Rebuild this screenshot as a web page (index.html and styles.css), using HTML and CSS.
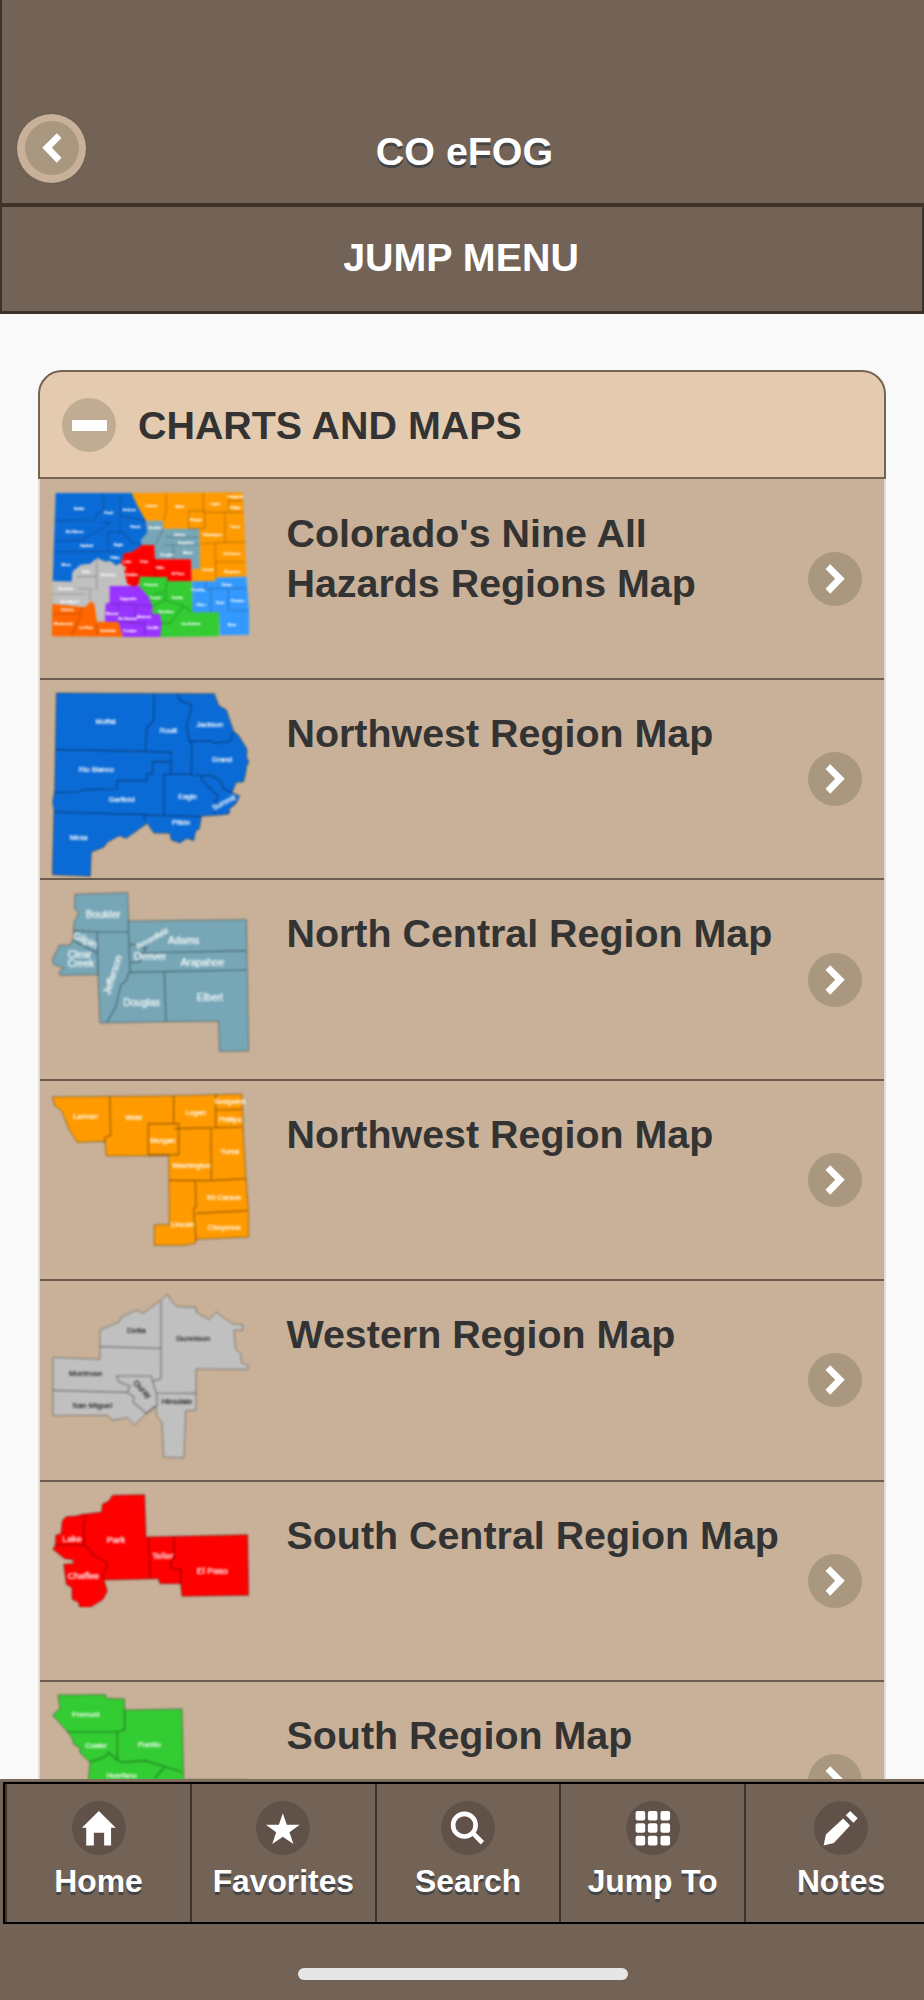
FILE: index.html
```html
<!DOCTYPE html>
<html lang="en">
<head>
  <meta charset="UTF-8">
  <meta name="viewport" content="width=device-width, initial-scale=1.0">
  <title>CO eFOG</title>
  <link rel="stylesheet" href="styles.css">
</head>
<body>

  <header class="header">
    <a class="back" href="#" aria-label="Back">
      <svg viewBox="0 0 163 163"><path d="M110 51L96 37 52 81 96 126 110 111 81 81z"/></svg>
    </a>
    <h1>CO eFOG</h1>
  </header>

  <div class="subheader">JUMP MENU</div>

  <main class="content">
    <h2 class="group-title">
      <span class="minus"></span>
      CHARTS AND MAPS
    </h2>

    <ul class="list">
      <li>
        <svg class="thumb overview" viewBox="36 36 591 436">
          <path fill="#0b6bd6" d="M47 39H275L293 78 318 122 322 160 303 180 306 195 276 216 252 220 243 250 228 257 212 244 194 245 172 234 150 252 122 255 98 275 95 305 38 303z"/>
          <path fill="#ff9a00" d="M275 39L608 37 612 110 619 288 528 293 527 303 455 304 457 268 480 266 478 146 370 146 368 122 318 122 293 78z"/>
          <path fill="#77a7b7" d="M322 122H368L370 146H478L480 266H455L453 238H345L343 195 306 195 303 180 322 160z"/>
          <path fill="#c0c0c0" d="M38 305H95L98 275 122 255 150 252 172 234 194 245 212 244 228 257 243 250 257 290 270 318H209V368L197 370 193 425H170L164 375 154 363 135 382 38 372z"/>
          <path fill="#f00" d="M252 220L276 216 306 195H343L345 238H453L455 304H382V292L300 290 297 312 284 321 262 312 253 275 260 264 243 250z"/>
          <path fill="#9933ff" d="M209 318H298L326 350 338 378 338 402 360 402 366 430 361 471H248L235 427 195 425 197 370 209 368z"/>
          <path fill="#33cc33" d="M300 290L382 292V304H455L457 397H537V469L361 471 366 430 360 402H338V378L326 350 298 318z"/>
          <path fill="#3399ff" d="M457 304H527V293L619 290 627 390V464L540 466 537 397H457z"/>
          <path fill="#ff6600" d="M37 372L135 382 154 363 164 375 170 425 235 427 248 470 36 469z"/>
          <path class="line" d="M47 122L165 120 172 100 190 90V39M47 182H120L160 160 182 150 210 127H180M40 215H243M203 157V215M203 157H250L276 186 303 195M240 45L243 108 318 122M240 110V157M110 290H170M170 234V330M38 342H135M115 325L152 327 148 360M37 402H115L130 384M95 465L125 400M170 428L172 466M378 40V90L372 122M490 38V97H612M446 92H494V146H446zM555 98V187H617M480 192L555 187M526 192L527 293M527 246H617M566 38V97M566 62H610M370 195H478M378 172H478M345 195L370 146M400 195V238M345 238V290M300 262L284 321M382 292L376 360 338 378M376 360L430 378 457 397M430 378L390 430 364 430M338 345L375 335M457 330L497 325V304M497 325H620M512 328V396M565 328V390L627 392M209 370L338 378M235 375V425L315 430V470M290 380L275 430"/>
          <g class="names tiny">
            <text x="117" y="89">Moffat</text><text x="206" y="102">Routt</text><text x="267" y="94">Jackson</text>
            <text x="104" y="159">Rio Blanco</text><text x="286" y="145">Grand</text><text x="140" y="202">Garfield</text>
            <text x="235" y="199">Eagle</text><text x="78" y="258">Mesa</text><text x="225" y="236">Pitkin</text>
            <text x="334" y="81">Larimer</text><text x="418" y="83">Weld</text><text x="525" y="74">Logan</text>
            <text x="468" y="124">Morgan</text><text x="585" y="143">Yuma</text><text x="518" y="168">Washington</text>
            <text x="576" y="226">Kit Carson</text><text x="576" y="279">Cheyenne</text><text x="504" y="273">Lincoln</text>
            <text x="586" y="55">Sedgwick</text><text x="586" y="87">Phillips</text>
            <text x="346" y="147">Boulder</text><text x="420" y="169">Adams</text><text x="438" y="191">Arapahoe</text>
            <text x="380" y="229">Douglas</text><text x="443" y="222">Elbert</text>
            <text x="138" y="279">Delta</text><text x="205" y="289">Gunnison</text><text x="78" y="331">Montrose</text><text x="88" y="368">San Miguel</text>
            <text x="262" y="249">Lake</text><text x="312" y="250">Park</text><text x="275" y="289">Chaffee</text><text x="360" y="266">Teller</text><text x="414" y="285">El Paso</text>
            <text x="265" y="361">Saguache</text><text x="217" y="406">Mineral</text><text x="262" y="420">Rio Grande</text><text x="312" y="413">Alamosa</text><text x="270" y="455">Conejos</text><text x="338" y="448">Costilla</text>
            <text x="333" y="317">Fremont</text><text x="347" y="358">Custer</text><text x="412" y="356">Pueblo</text><text x="378" y="398">Huerfano</text><text x="453" y="436">Las Animas</text>
            <text x="474" y="332">Crowley</text><text x="560" y="318">Kiowa</text><text x="483" y="378">Otero</text><text x="540" y="373">Bent</text><text x="593" y="365">Prowers</text><text x="576" y="437">Baca</text>
            <text x="82" y="392">Dolores</text><text x="70" y="436">Montezuma</text><text x="138" y="447">La Plata</text><text x="204" y="457">Archuleta</text>
          </g>
        </svg>
        <h3>Colorado's Nine All Hazards Regions Map</h3>
        <span class="arrow"><svg viewBox="0 0 163 163"><path d="M53 51L67 37 111 81 67 126 53 111 82 81z"/></svg></span>
      </li>
      <li>
        <svg class="thumb" viewBox="36 36 591 556">
          <path class="shape" fill="#0b6bd6" d="M49 39L523 41 536 76 559 90 581 154 595 165 621 207 620 233 627 246 620 258 616 285 610 306 589 307 576 338 599 348 587 372 570 385 567 402 541 405 484 409 478 447 467 453 461 482 440 475 420 489 394 480 389 460 341 459 322 430 258 475 238 467 203 486 191 502 154 516 151 589 37 584 42 390 38 365 44 330z"/>
          <path class="line" d="M342 40L341 122 320 145 316 212M47 209L316 214 393 217V282M393 245H338V282H320V302H232L230 327 125 329 121 336 44 337M42 396L310 404 370 407M372 407V282M372 282L454 283M310 404L316 424M370 407L484 409M414 41L418 58 437 70 453 72V90L440 135 447 180 455 190 454 285 515 287 541 303 549 325 576 338M447 185L512 182 524 190 570 183 581 157M482 288L490 305 534 348 520 375 524 402"/>
          <g class="names">
            <text x="197" y="133">Moffat</text><text x="385" y="158">Routt</text><text x="510" y="140">Jackson</text><text x="546" y="246">Grand</text>
            <text x="169" y="277">Rio Blanco</text><text x="245" y="366">Garfield</text><text x="443" y="358">Eagle</text>
            <text x="423" y="436">Pitkin</text><text x="116" y="480">Mesa</text>
            <text x="552" y="375" transform="rotate(-27 552 369)">Summit</text>
          </g>
        </svg>
        <h3>Northwest Region Map</h3>
        <span class="arrow"><svg viewBox="0 0 163 163"><path d="M53 51L67 37 111 81 67 126 53 111 82 81z"/></svg></span>
      </li>
      <li>
        <svg class="thumb" viewBox="36 39 591 482">
          <path class="shape" fill="#77a7b7" d="M105 46L263 41 266 126 619 122 626 516 538 517 536 427 378 428 180 432 174 287 60 289 57 278 72 268 40 256 38 240 58 199 91 198 100 178 102 130 116 102 104 88z"/>
          <path class="line" d="M102 155L172 159H265V126M172 159L174 287M100 185L172 222M266 160L270 280 264 285 259 305 242 318 228 382 201 430M268 280L619 273M268 197H290L300 207 320 205 310 222 619 215M270 252L300 248 310 222M373 281L378 428"/>
          <g class="names large">
            <text x="190" y="117">Boulder</text><text x="431" y="194">Adams</text><text x="487" y="261">Arapahoe</text><text x="330" y="243">Denver</text>
            <text x="510" y="365">Elbert</text><text x="305" y="381">Douglas</text><text x="119" y="238">Clear</text><text x="123" y="265">Creek</text>
            <text x="136" y="193" transform="rotate(25 136 184)">Gilpin</text>
            <text x="219" y="297" transform="rotate(-72 219 288)">Jefferson</text>
            <text class="small" x="336" y="186" transform="rotate(-29 336 178)">Broomfield</text>
          </g>
        </svg>
        <h3>North Central Region Map</h3>
        <span class="arrow"><svg viewBox="0 0 163 163"><path d="M53 51L67 37 111 81 67 126 53 111 82 81z"/></svg></span>
      </li>
      <li>
        <svg class="thumb" viewBox="36 39 591 460">
          <path class="shape" fill="#ff9a00" d="M37 51L401 47 606 42 611 180 618 294 626 390V471L468 478 466 490 430 496H343V434H388L386 227 199 228 195 184 112 187 88 150 64 91 45 78z"/>
          <path class="line" d="M209 49L212 166 195 172V187M401 47V131M325 131H416V224H325zM403 146L527 143V43M527 143L608 141M527 90L606 88M513 146L514 299M388 301L514 302 618 296M466 303L468 380 461 387 468 480M468 400L623 392"/>
          <g class="names">
            <text x="137" y="118">Larimer</text><text x="281" y="120">Weld</text><text x="467" y="104">Logan</text><text x="570" y="72">Sedgwick</text>
            <text x="570" y="125">Phillips</text><text x="368" y="188">Morgan</text><text x="569" y="221">Yuma</text><text x="454" y="264">Washington</text>
            <text x="552" y="361">Kit Carson</text><text x="428" y="442">Lincoln</text><text x="553" y="450">Cheyenne</text>
          </g>
        </svg>
        <h3>Northwest Region Map</h3>
        <span class="arrow"><svg viewBox="0 0 163 163"><path d="M53 51L67 37 111 81 67 126 53 111 82 81z"/></svg></span>
      </li>
      <li>
        <svg class="thumb" viewBox="36 40 591 498">
          <path class="shape" fill="#c0c0c0" d="M384 44L392 62 411 81 468 83 470 99 508 120 528 97 578 133 609 135 608 151 582 152 586 207 602 222 605 250 624 257V269L468 268V391L437 393 432 534 371 533 366 428 351 410 348 380 318 402 284 437 262 414 218 422 203 407 39 408V233L180 239V151L237 127 243 114 289 91 309 101 360 64z"/>
          <path class="line" d="M180 201L362 206M363 65V297L338 305 334 289H230L237 307 270 319 262 338 39 332M262 338L282 352 279 367 313 396 318 402M338 305L349 340 468 341M349 340L352 375 318 402"/>
          <g class="names dark">
            <text x="289" y="161">Delta</text><text x="459" y="185">Gunnison</text><text x="137" y="288">Montrose</text><text x="157" y="385">San Miguel</text>
            <text x="411" y="374">Hinsdale</text>
            <text x="307" y="337" transform="rotate(45 307 329)">Ouray</text>
          </g>
        </svg>
        <h3>Western Region Map</h3>
        <span class="arrow"><svg viewBox="0 0 163 163"><path d="M53 51L67 37 111 81 67 126 53 111 82 81z"/></svg></span>
      </li>
      <li>
        <svg class="thumb" viewBox="36 41 591 341">
          <path class="shape" fill="#f00" d="M218 45L314 43 318 170 623 163 626 345 426 348 422 310H360L355 295 192 299 202 333 188 358 152 380H118L116 366 96 357V322L79 312 71 252 100 250 99 238 74 235 38 206 47 195V165L63 160 67 121 78 109 110 107 127 102 147 100 185 95 187 72 206 62z"/>
          <path class="line" d="M137 104L130 135 133 196 150 208 155 222 200 246 202 258 188 280 190 299M40 194H133M325 171L331 294M402 170V235L391 245 395 265 422 267V310"/>
          <g class="names mid">
            <text x="96" y="184">Lake</text><text x="228" y="189">Park</text><text x="368" y="235">Teller</text><text x="130" y="297">Chaffee</text><text x="517" y="282">El Paso</text>
          </g>
        </svg>
        <h3>South Central Region Map</h3>
        <span class="arrow"><svg viewBox="0 0 163 163"><path d="M53 51L67 37 111 81 67 126 53 111 82 81z"/></svg></span>
      </li>
      <li>
        <svg class="thumb" viewBox="156 42 591 450">
          <path class="shape" fill="#33cc33" d="M174 45L316 44 319 55 373 57 374 90 546 87 551 300H744V490H290L265 300 270 247 240 218V205L222 193 215 172 201 153 158 106 180 85z"/>
          <path class="line" d="M201 156H345L374 150V90M352 156V240L367 247 437 242 546 276M270 247L318 229 326 217 352 240M492 262L462 298"/>
          <g class="names">
            <text x="258" y="110">Fremont</text><text x="288" y="205">Custer</text><text x="448" y="201">Pueblo</text><text x="365" y="295">Huerfano</text>
          </g>
        </svg>
        <h3>South Region Map</h3>
        <span class="arrow"><svg viewBox="0 0 163 163"><path d="M53 51L67 37 111 81 67 126 53 111 82 81z"/></svg></span>
      </li>
    </ul>
  </main>

  <footer class="footer">
    <nav class="navbar">
      <a href="#">
        <svg viewBox="215 363 163 163"><path d="M296 393L347 444H333V497H312V459H281V497H258V444H245z"/></svg>
        Home
      </a>
      <a href="#">
        <svg viewBox="769 363 163 163"><path d="M850 400L862 435H901L870 457 882 493 850 471 818 493 830 457 799 435H838z"/></svg>
        Favorites
      </a>
      <a href="#">
        <svg viewBox="-57 363 163 163"><circle class="ring" cx="13.500" cy="436" r="34"/><path d="M35 466L45 456 73 484 63 494z"/></svg>
        Search
      </a>
      <a href="#">
        <svg viewBox="498 363 163 163">
          <rect x="527" y="393" width="29" height="29" rx="6"/><rect x="564" y="393" width="29" height="29" rx="6"/><rect x="602" y="393" width="29" height="29" rx="6"/>
          <rect x="527" y="430" width="29" height="29" rx="6"/><rect x="564" y="430" width="29" height="29" rx="6"/><rect x="602" y="430" width="29" height="29" rx="6"/>
          <rect x="527" y="468" width="29" height="29" rx="6"/><rect x="564" y="468" width="29" height="29" rx="6"/><rect x="602" y="468" width="29" height="29" rx="6"/>
        </svg>
        Jump To
      </a>
      <a href="#">
        <svg viewBox="1067 363 163 163"><path d="M1096 497L1103 464 1155 416 1176 437 1127 490zM1163 406L1176 393 1199 415 1186 429z"/></svg>
        Notes
      </a>
    </nav>
    <div class="home-bar"></div>
  </footer>

</body>
</html>
```

FILE: styles.css
```css
:root {
  --brown: #736357;
  --brown-dark: #3e332b;
  --tan: #c8b198;
  --line: #736453;
}

* {
  box-sizing: border-box;
}

body {
  margin: 0;
  height: 2000px;
  display: flex;
  flex-direction: column;
  overflow: hidden;
  background: #f9f9f9;
  color: #333;
  font-family: "Liberation Sans", Arial, sans-serif;
  font-size: 39.4px;
  font-weight: bold;
}

h1, h2, h3, ul {
  margin: 0;
  padding: 0;
  font-size: inherit;
}

a {
  color: inherit;
  text-decoration: none;
}

svg {
  display: block;
  fill: #fff;
}

.header {
  flex: none;
  height: 205px;
  padding: 113px 14px 0 15px;
  display: grid;
  grid-template-columns: 69px 1fr 67px;
  align-items: start;
  background: var(--brown);
  border-left: 2px solid var(--brown-dark);
  border-bottom: 2px solid var(--brown-dark);
  color: #fff;
  text-align: center;
  text-shadow: 0 2.5px 0 #444;
}

.header h1 {
  padding-top: 14px;
  line-height: 48px;
}

.back {
  width: 69px;
  height: 69px;
  margin-top: 0.5px;
  padding: 7.5px;
  border-radius: 50%;
  background: var(--tan);
  box-shadow: 0 0 2px #5c5040;
}

.back svg {
  width: 54px;
  height: 54px;
  border-radius: 50%;
  background: #a9977f;
}

.subheader {
  flex: none;
  height: 109px;
  padding-right: 2px;
  line-height: 101px;
  background: var(--brown);
  border: 2px solid var(--brown-dark);
  border-bottom-width: 3px;
  color: #fff;
  text-align: center;
}

.content {
  flex: 1;
  min-height: 0;
  padding: 56px 38px 0;
  overflow: hidden;
}

.group-title {
  display: flex;
  align-items: center;
  gap: 22px;
  height: 109px;
  padding: 1px 0 0 22px;
  background: #e4cbb0;
  border: 2px solid var(--line);
  border-radius: 24px 24px 0 0;
}

.minus {
  display: grid;
  place-items: center;
  width: 54px;
  height: 54px;
  border-radius: 50%;
  background: #c0ac93;
}

.minus::before {
  content: "";
  width: 35px;
  height: 11px;
  background: #fff;
}

.list {
  list-style: none;
  border: solid #ddd;
  border-width: 0 2px;
}

.list li {
  display: grid;
  grid-template-columns: 197px 510px 54px;
  justify-content: space-between;
  height: 200.4px;
  padding: 12px 22px 0 12px;
  background: var(--tan);
  border-top: 2px solid #6b5d50;
}

.list li:first-child {
  height: 199px;
  border-top: 0;
  padding-top: 13px;
}

.list h3 {
  margin: 0 -13px 0 13px;
  padding-top: 17px;
  line-height: 49.5px;
}

.thumb {
  width: 197px;
  filter: blur(0.8px);
}

.arrow {
  align-self: center;
  width: 54px;
  height: 54px;
  margin-top: -12px;
  border-radius: 50%;
  background: #a9977f;
}

/* county maps */
.shape {
  stroke: rgba(0, 0, 0, 0.35);
  stroke-width: 3;
}

.line {
  fill: none;
  stroke: rgba(0, 0, 0, 0.4);
  stroke-width: 3.5;
}

.overview .line {
  stroke: rgba(0, 0, 0, 0.22);
}

.names {
  fill: #fff;
  stroke: #fff;
  stroke-width: 0.6;
  font-size: 22px;
  font-weight: normal;
  text-anchor: middle;
}

.names.large {
  font-size: 30px;
}

.names .small {
  font-size: 22px;
}

.names.mid {
  font-size: 27px;
}

.names.dark {
  fill: #222;
  stroke: #222;
  font-size: 24px;
}

.names.tiny {
  font-size: 11px;
}

.footer {
  flex: none;
  height: 221px;
  padding: 1px 0 0 3px;
  background: var(--brown);
  border-top: 2px solid #7d6e5d;
  overflow: hidden;
}

.navbar {
  display: grid;
  grid-template-columns: 187px 184.7px 184.7px 184.7px 192px;
  height: 142px;
  width: 938px;
  border: 2px solid #000;
  color: #fff;
  font-size: 31.8px;
  line-height: 40px;
  text-shadow: 0 2.5px 0 #444;
}

.navbar a {
  display: flex;
  flex-direction: column;
  align-items: center;
  gap: 6px;
  padding-top: 17px;
  border-right: 2px solid var(--brown-dark);
}

.navbar a:first-child {
  border-left: 2px solid var(--brown-dark);
}

.navbar svg {
  width: 54px;
  height: 54px;
  border-radius: 50%;
  background: #605248;
}

.navbar .ring {
  fill: none;
  stroke: #fff;
  stroke-width: 14;
}

.home-bar {
  width: 330px;
  height: 12px;
  margin: 44px 0 0 294.5px;
  border-radius: 6px;
  background: #e6e6e6;
}
```
